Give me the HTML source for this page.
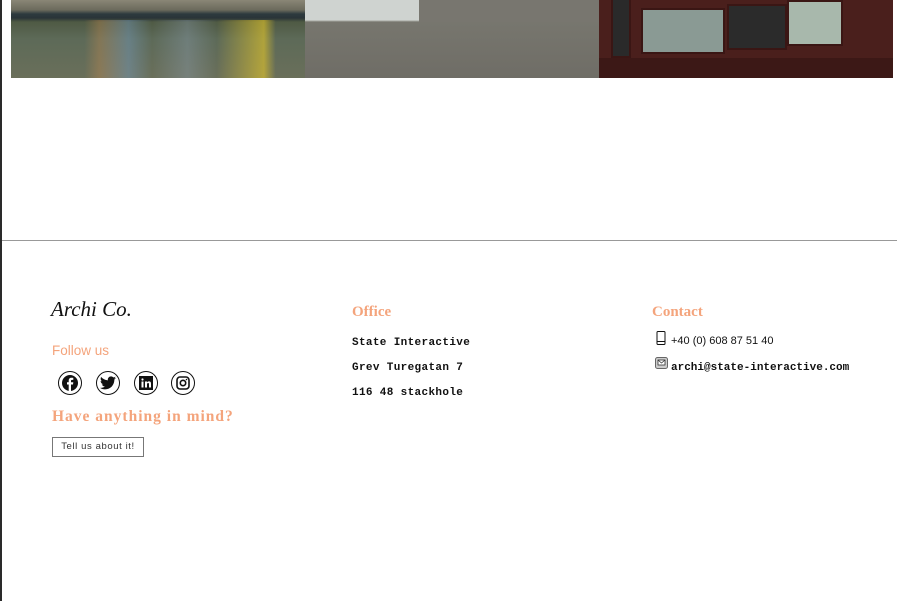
<!DOCTYPE html>
<html><head><meta charset="utf-8"><style>
*{margin:0;padding:0;box-sizing:border-box}
body{width:897px;height:601px;background:#fff;position:relative;overflow:hidden;font-family:"Liberation Sans",sans-serif}
.lb{position:absolute;left:0;top:0;width:2px;height:601px;background:#2a2a2a}
.img{position:absolute;top:0;height:78px}
.i1{left:11px;width:294px;background:linear-gradient(180deg,#8a8676 0,#6b6a5c 10px,#2d3a3e 14px,#2a3438 18px,#4f5a44 22px,#5d6a58 50%,#6a6f5a 100%)}
.i1:after{content:"";position:absolute;inset:20px 0 0 0;background:linear-gradient(90deg,transparent 25%,rgba(200,140,80,.35) 30%,rgba(120,160,200,.4) 40%,transparent 48%,rgba(150,170,200,.3) 60%,transparent 70%,rgba(230,200,40,.6) 86%,transparent 90%)}
.i2{left:305px;width:294px;background:linear-gradient(180deg,#cfd3d0 0,#cfd3d0 20px,#77766e 22px,#6f6d66 100%)}
.i2:after{content:"";position:absolute;left:114px;top:0;right:0;height:22px;background:#78766f}
.i3{left:599px;width:294px;background:#4a1f1c}
.w{position:absolute;background:#8a9a94;border:2px solid #3a1614}
.hr{position:absolute;left:2px;right:0;top:240px;height:1px;background:#999}
.logo{position:absolute;left:51px;top:297px;font-family:"Liberation Serif",serif;font-style:italic;font-size:21px;color:#111}
.or{color:#f4a47c}
.h{position:absolute;font-family:"Liberation Serif",serif;font-weight:bold;font-size:15px}
.mono{position:absolute;font-family:"Liberation Mono",monospace;font-weight:bold;font-size:11px;color:#111}
.ic{position:absolute;top:371px;width:24px;height:24px;border:1.5px solid #111;border-radius:50%;display:flex;align-items:center;justify-content:center}
.btn{position:absolute;left:52px;top:437px;width:92px;height:20px;border:1.5px solid #777;font-size:9.5px;letter-spacing:.6px;color:#333;text-align:center;line-height:17px}
</style></head><body>
<div class="lb"></div>
<div class="img i1"></div>
<div class="img i2"></div>
<div class="img i3">
<div class="w" style="left:12px;top:-2px;width:20px;height:60px;background:#2a2a2a"></div>
<div class="w" style="left:42px;top:8px;width:84px;height:46px"></div>
<div class="w" style="left:128px;top:4px;width:60px;height:46px;background:#2b2b2b"></div>
<div class="w" style="left:188px;top:0;width:56px;height:46px;background:#a8b8ac"></div>
<div style="position:absolute;left:0;right:0;top:58px;height:20px;background:#3c1816"></div>
</div>
<div class="hr"></div>
<div class="logo">Archi Co.</div>
<div class="or" style="position:absolute;left:52px;top:343px;font-size:13.5px">Follow us</div>
<div class="ic" style="left:58px"><svg width="16" height="16" viewBox="0 0 16 16"><circle cx="8" cy="8" r="8" fill="#111"/><path d="M9 16V9.5h2l.3-2.3H9V6c0-.7.2-1.1 1.1-1.1h1.2v-2c-.6-.1-1.2-.1-1.8-.1-1.7 0-2.8 1-2.8 2.9v1.5H5v2.3h1.7V16z" fill="#fff"/></svg></div>
<div class="ic" style="left:96px"><svg width="16" height="14" viewBox="0 0 24 20"><path d="M24 2.4c-.9.4-1.800.7-2.8.8 1-.6 1.8-1.6 2.2-2.7-1 .6-2 1-3.1 1.2C19.3.7 18 0 16.6 0c-2.7 0-4.900 2.2-4.9 4.9 0 .4 0 .8.1 1.1C7.7 5.8 4.1 3.9 1.7.9c-.4.7-.7 1.6-.7 2.5 0 1.7.9 3.2 2.2 4.1-.8 0-1.6-.2-2.2-.6v.1c0 2.4 1.7 4.4 3.9 4.8-.4.1-.8.2-1.3.2-.3 0-.6 0-.9-.1.6 2 2.4 3.4 4.6 3.4-1.7 1.3-3.8 2.1-6.1 2.1-.4 0-.8 0-1.2-.1 2.2 1.4 4.8 2.2 7.5 2.2 9.1 0 14-7.5 14-14v-.6c1-.7 1.8-1.6 2.5-2.5z" fill="#111"/></svg></div>
<div class="ic" style="left:134px"><svg width="14" height="14" viewBox="0 0 14 14"><rect width="14" height="14" fill="#111"/><rect x="2.5" y="5.5" width="2" height="6" fill="#fff"/><circle cx="3.5" cy="3.5" r="1.1" fill="#fff"/><path d="M6 5.5h2v1c.4-.7 1-1.1 2-1.1 1.5 0 2 .9 2 2.5v3.6h-2V8.2c0-.8-.2-1.2-.9-1.2S8 7.5 8 8.3v3.2H6z" fill="#fff"/></svg></div>
<div class="ic" style="left:171px"><svg width="14" height="14" viewBox="0 0 14 14"><rect x="1" y="1" width="12" height="12" rx="3" fill="none" stroke="#111" stroke-width="1.6"/><circle cx="7" cy="7" r="2.7" fill="none" stroke="#111" stroke-width="1.6"/><circle cx="10.5" cy="3.5" r=".8" fill="#111"/></svg></div>
<div class="h or" style="left:52px;top:408px;font-size:15.5px;letter-spacing:1px">Have anything in mind?</div>
<div class="btn">Tell us about it!</div>
<div class="h or" style="left:352px;top:304px">Office</div>
<div class="mono" style="left:352px;top:337px;letter-spacing:.35px">State Interactive</div>
<div class="mono" style="left:352px;top:362px;letter-spacing:.35px">Grev Turegatan 7</div>
<div class="mono" style="left:352px;top:387px;letter-spacing:.35px">116 48 stackhole</div>
<div class="h or" style="left:652px;top:304px">Contact</div>
<svg style="position:absolute;left:656px;top:331px" width="10" height="14" viewBox="0 0 10 14"><rect x="1" y=".5" width="8" height="13" rx="1" fill="none" stroke="#111"/><line x1="1" y1="10.5" x2="9" y2="10.5" stroke="#111"/></svg>
<div style="position:absolute;left:671px;top:335px;font-size:11px;color:#111">+40 (0) 608 87 51 40</div>
<svg style="position:absolute;left:655px;top:357px" width="13" height="12" viewBox="0 0 13 12"><rect x=".5" y=".5" width="12" height="11" rx="2" fill="#ccc" stroke="#666"/><rect x="3" y="3" width="7" height="5" fill="#fff" stroke="#333" stroke-width=".8"/><path d="M3 3l3.5 3L10 3" fill="none" stroke="#333" stroke-width=".8"/></svg>
<div class="mono" style="left:671px;top:362px">archi@state-interactive.com</div>
</body></html>
